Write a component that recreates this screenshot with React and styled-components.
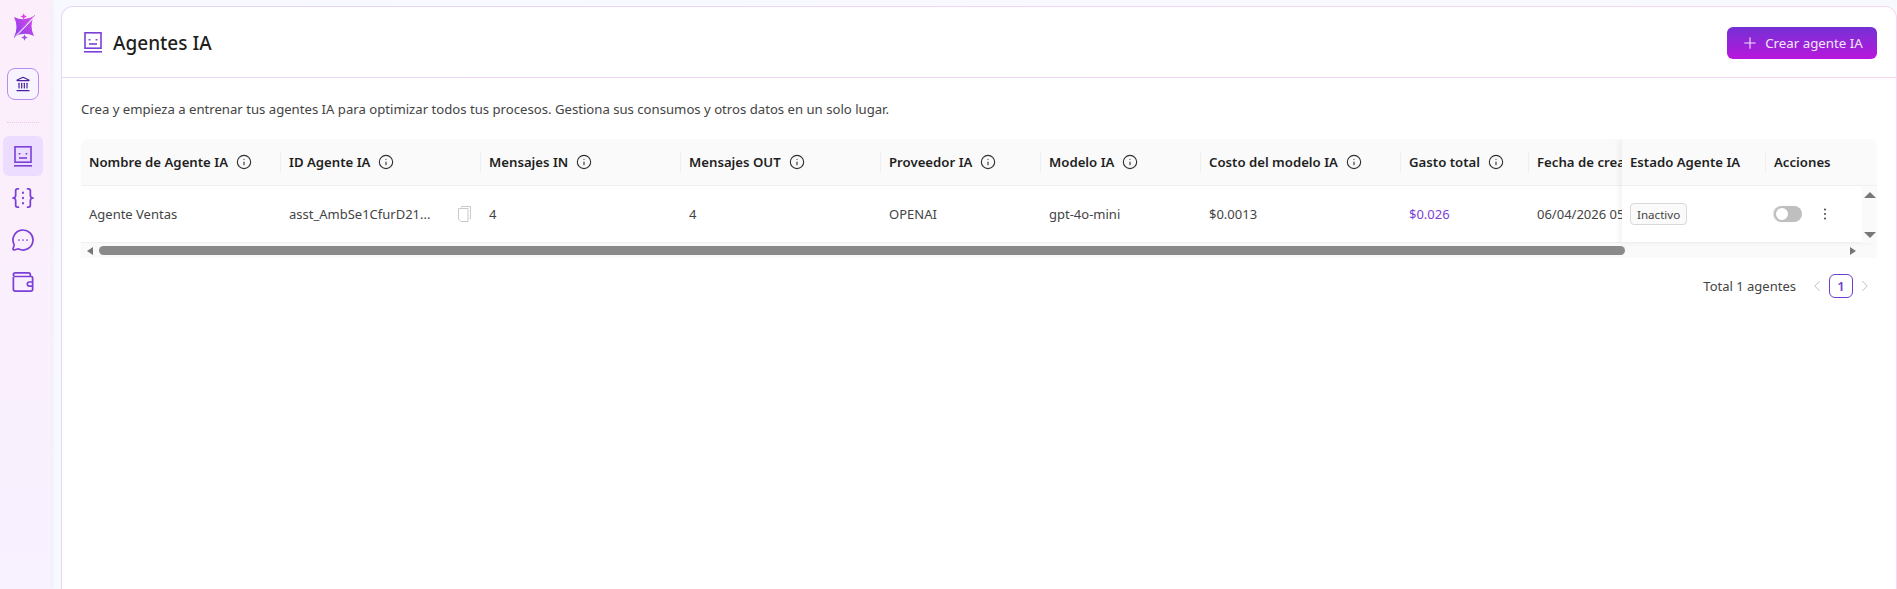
import { ChevronLeft, ChevronRight, Info, Landmark, MessageCircleMore, Plus } from "lucide-react";
import styled, { createGlobalStyle } from "styled-components";

const GlobalStyle = createGlobalStyle`
  html, body {
    margin: 0;
    height: 100%;
    overflow: hidden;
    background: #f8f9fe;
    font-family: "Noto Sans", "Open Sans", sans-serif;
  }
  * { box-sizing: border-box; }
`;

const Page = styled.div`
  display: flex;
  height: 589px;
  overflow: hidden;
`;

const Sidebar = styled.aside`
  width: 51px;
  flex-shrink: 0;
  display: flex;
  flex-direction: column;
  align-items: center;
  padding-top: 13px;
  background: linear-gradient(180deg, #fdeefb 0%, #f8f1ff 100%);
  box-shadow: 1px 0 4px rgba(90, 60, 140, 0.08);
`;

const Logo = styled.svg`
  width: 24px;
  height: 28px;
  margin: 0 0 27px -2px;
`;

const BankButton = styled.div`
  width: 32px;
  height: 32px;
  display: flex;
  align-items: center;
  justify-content: center;
  margin-left: -5px;
  border: 1px solid #b78cf0;
  border-radius: 8px;
  background: #f8f4ff;
  color: #4b1fa3;
`;

const SideDivider = styled.div`
  width: 32px;
  margin: 22px 0 13px -5px;
  border-top: 1px dotted #f3c4e8;
`;

const NavItem = styled.div`
  width: 40px;
  height: 40px;
  margin-left: -5px;
  margin-bottom: 2px;
  display: flex;
  align-items: center;
  justify-content: center;
  border-radius: 6px;
  color: #7c3fd8;
  background: ${({ $active }) => ($active ? "#ecdcff" : "transparent")};
`;

const Main = styled.main`
  flex: 1;
  min-width: 0;
  padding: 6px 0 0 10px;
`;

const Card = styled.section`
  height: 640px;
  border: 1px solid transparent;
  border-radius: 12px 12px 0 0;
  background:
    linear-gradient(#fff, #fff) padding-box,
    linear-gradient(90deg, #e6d6f8, #fbd6f0) border-box;
`;

const Header = styled.header`
  height: 71px;
  display: flex;
  align-items: center;
  justify-content: space-between;
  padding: 1px 19px 0 22px;
  border-bottom: 1px solid transparent;
  border-image: linear-gradient(90deg, #e6d6f8, #fbd6f0) 1;
`;

const TitleGroup = styled.div`
  display: flex;
  align-items: center;
  gap: 11px;
  color: #7c3fd8;
`;

const Title = styled.h1`
  margin: 0;
  font-size: 19px;
  font-weight: 500;
  color: #1f1f1f;
`;

const CreateButton = styled.button`
  width: 150px;
  height: 32px;
  display: flex;
  align-items: center;
  justify-content: center;
  gap: 6px;
  border: none;
  border-radius: 6px;
  font: 13.3px "Noto Sans", sans-serif;
  color: #f3e6fb;
  background: linear-gradient(180deg, #7430d4 0%, #b917dc 100%);
`;

const Content = styled.div`
  padding: 21px 19px 0;
`;

const Intro = styled.p`
  margin: 0 0 20px;
  font-size: 13.15px;
  line-height: 20px;
  color: #444;
`;

const TableBox = styled.div`
  border-radius: 8px 8px 0 0;
  overflow: hidden;
`;

const TableRow = styled.div`
  display: flex;
`;

const ScrollPane = styled.div`
  width: 1541px;
  flex-shrink: 0;
  overflow: hidden;
`;

const FixedPane = styled.div`
  width: 255px;
  flex-shrink: 0;
  background: #fff;
  box-shadow: -3px 0 6px rgba(0, 0, 0, 0.05);
  z-index: 1;
`;

const Grid = styled.div`
  display: grid;
  grid-template-columns: ${({ $columns }) => $columns};
`;

const HeadCell = styled.div`
  position: relative;
  height: 47px;
  display: flex;
  align-items: center;
  gap: 8px;
  padding: 0 8px;
  font-size: 13.2px;
  font-weight: 600;
  white-space: nowrap;
  overflow: hidden;
  color: #1f1f1f;
  background: #fafafa;
  border-bottom: 1px solid #f0f0f0;
  ${({ $separator }) =>
    $separator &&
    `&::after {
      content: "";
      position: absolute;
      right: 0;
      top: 12px;
      height: 22px;
      width: 1px;
      background: #f0f0f0;
    }`}
  svg { flex-shrink: 0; color: #333; }
`;

const BodyCell = styled.div`
  height: 57px;
  display: flex;
  align-items: center;
  justify-content: ${({ $spread }) => ($spread ? "space-between" : "flex-start")};
  padding: ${({ $spread }) => ($spread ? "0 10px 0 8px" : "0 8px")};
  font-size: 13px;
  white-space: nowrap;
  overflow: hidden;
  color: ${({ $accent }) => ($accent ? "#7c3fd8" : "#444")};
  border-bottom: 1px solid #f0f0f0;
`;

const ActionsCell = styled(BodyCell)`
  gap: 21px;
  color: #555;
`;

const Tag = styled.span`
  height: 22px;
  padding: 0 6px;
  display: inline-flex;
  align-items: center;
  font-size: 11.6px;
  color: #444;
  background: #fafafa;
  border: 1px solid #d9d9d9;
  border-radius: 4px;
`;

const Switch = styled.span`
  width: 28px;
  height: 16px;
  padding: 2px;
  border-radius: 8px;
  background: #bfbfbf;
  box-shadow: -1px 0 1px rgba(0, 0, 0, 0.15);
`;

const SwitchHandle = styled.span`
  display: block;
  width: 12px;
  height: 12px;
  border-radius: 50%;
  background: #fff;
`;

const VerticalBar = styled.div`
  width: 15px;
  height: 57px;
  flex-shrink: 0;
  display: flex;
  flex-direction: column;
  align-items: center;
  justify-content: space-between;
  padding: 6px 0 5px;
  background: #fafafa;
`;

const FixedBody = styled.div`
  display: flex;
`;

const HorizontalBar = styled.div`
  height: 15px;
  display: flex;
  align-items: center;
  justify-content: space-between;
  padding: 0 21px 0 6px;
  background: #fafafa;
`;

const BarLeft = styled.div`
  display: flex;
  align-items: center;
  gap: 6px;
`;

const Thumb = styled.div`
  width: 1526px;
  height: 9px;
  border-radius: 5px;
  background: #8a8a8a;
`;

const Arrow = styled.span`
  width: 0;
  height: 0;
  border-style: solid;
  border-color: transparent;
  ${({ $dir }) =>
    ({
      left: "border-width: 4px 6px 4px 0; border-right-color: #777;",
      right: "border-width: 4px 0 4px 6px; border-left-color: #777;",
      up: "border-width: 0 6px 6px; border-bottom-color: #777;",
      down: "border-width: 6px 6px 0; border-top-color: #777;",
    })[$dir]}
`;

const Pagination = styled.div`
  display: flex;
  align-items: center;
  justify-content: flex-end;
  height: 24px;
  margin-top: 16px;
  padding-right: 3px;
  font-size: 13px;
  color: #444;
  svg { color: #bdbdbd; }
`;

const Total = styled.span`
  margin-right: 12px;
`;

const PageNumber = styled.span`
  width: 24px;
  height: 24px;
  margin: 0 3px;
  display: flex;
  align-items: center;
  justify-content: center;
  font-weight: 600;
  color: #6f3fd0;
  border: 1px solid #6f3fd0;
  border-radius: 6px;
`;

const AgentIcon = () => (
  <svg width="18" height="21" viewBox="0 0 18 21" fill="none" stroke="currentColor" strokeWidth="1.6">
    <rect x="1" y="0.8" width="16" height="15.4" />
    <path d="M0 19.8h18" />
    <path d="M5.5 7v1.6M12.5 7v1.6" strokeWidth="1.8" />
    <path d="M5 12h8" />
  </svg>
);

const BracesIcon = () => (
  <svg width="22" height="22" viewBox="0 0 24 24" fill="none" stroke="currentColor" strokeWidth="1.9" strokeLinecap="round" strokeLinejoin="round">
    <path d="M7 2H6a2 2 0 0 0-2 2v5a3 3 0 0 1-3 3 3 3 0 0 1 3 3v5a2 2 0 0 0 2 2h1" />
    <path d="M17 2h1a2 2 0 0 1 2 2v5a3 3 0 0 0 3 3 3 3 0 0 0-3 3v5a2 2 0 0 1-2 2h-1" />
    <path d="M12 6v.5M12 11.7v.5M12 17.5v.5" strokeWidth="2.2" />
  </svg>
);

const WalletIcon = () => (
  <svg width="22" height="22" viewBox="0 0 24 24" fill="none" stroke="currentColor" strokeWidth="1.9" strokeLinejoin="round">
    <path d="M1.5 6.5V20a2 2 0 0 0 2 2h17a2 2 0 0 0 2-2V7.5a1.5 1.5 0 0 0-1.5-1.5H3.5a2 2 0 0 1 0-4H18a2 2 0 0 1 2 2v2" />
    <path d="M23 12h-4a2.2 2.2 0 0 0 0 4.5h4" />
  </svg>
);

const CopyIcon = () => (
  <svg width="13" height="16" viewBox="0 0 13 16" fill="none" stroke="#c9c9c9" strokeWidth="1">
    <path d="M3.5 1.5V0.5h9v12h-1" />
    <path d="M0.5 2.5h9.5v13H3L0.5 13z" fill="#fff" />
  </svg>
);

const DotsIcon = () => (
  <svg width="4" height="12" viewBox="0 0 4 12" fill="#555">
    <circle cx="2" cy="1.5" r="1.1" />
    <circle cx="2" cy="6" r="1.1" />
    <circle cx="2" cy="10.5" r="1.1" />
  </svg>
);

const columns = [
  { title: "Nombre de Agente IA", value: "Agente Ventas" },
  { title: "ID Agente IA", value: "asst_AmbSe1CfurD21...", copy: true },
  { title: "Mensajes IN", value: "4" },
  { title: "Mensajes OUT", value: "4" },
  { title: "Proveedor IA", value: "OPENAI" },
  { title: "Modelo IA", value: "gpt-4o-mini" },
  { title: "Costo del modelo IA", value: "$0.0013" },
  { title: "Gasto total", value: "$0.026", accent: true },
  { title: "Fecha de creación", value: "06/04/2026 05:12", plain: true },
];

const scrollColumns = "200px 200px 200px 200px 160px 160px 200px 128px 200px";
const fixedColumns = "144px 111px";

const App = () => {
  return (
    <>
      <GlobalStyle />
      <Page>
        <Sidebar>
          <Logo viewBox="0 0 24 28">
            <defs>
              <linearGradient id="logoFill" x1="0" y1="1" x2="1" y2="0">
                <stop offset="0" stopColor="#8a3cf0" />
                <stop offset="1" stopColor="#d64be6" />
              </linearGradient>
            </defs>
            <path d="M1 4 Q11 9 21 3 Q16 13 21 23 Q11 18 1 24 Q6 14 1 4Z" fill="url(#logoFill)" />
            <path d="M2 24 L21 4" stroke="#fff" strokeWidth="1.2" />
            <path d="M1 25 L22 2" stroke="#b05ae8" strokeWidth="0.7" />
            <path d="M10.7 0.3 L11.6 2.6 L14 3.5 L11.6 4.4 L10.7 6.7 L9.8 4.4 L7.4 3.5 L9.8 2.6Z" fill="#e03fe0" />
            <path d="M11.5 21.3 L12.4 23.6 L14.8 24.5 L12.4 25.4 L11.5 27.7 L10.6 25.4 L8.2 24.5 L10.6 23.6Z" fill="#a04be8" />
          </Logo>
          <BankButton>
            <Landmark size={16} strokeWidth={1.8} />
          </BankButton>
          <SideDivider />
          <NavItem $active>
            <AgentIcon />
          </NavItem>
          <NavItem>
            <BracesIcon />
          </NavItem>
          <NavItem>
            <MessageCircleMore size={24} strokeWidth={1.7} />
          </NavItem>
          <NavItem>
            <WalletIcon />
          </NavItem>
        </Sidebar>
        <Main>
          <Card>
            <Header>
              <TitleGroup>
                <AgentIcon />
                <Title>Agentes IA</Title>
              </TitleGroup>
              <CreateButton>
                <Plus size={18} strokeWidth={1.5} />
                Crear agente IA
              </CreateButton>
            </Header>
            <Content>
              <Intro>
                Crea y empieza a entrenar tus agentes IA para optimizar todos tus procesos. Gestiona sus consumos y otros datos en un solo lugar.
              </Intro>
              <TableBox>
                <TableRow>
                  <ScrollPane>
                    <Grid $columns={scrollColumns}>
                      {columns.map((col, i) => (
                        <HeadCell key={col.title} $separator={i < columns.length - 1}>
                          {col.title}
                          {!col.plain && <Info size={16} strokeWidth={1.7} />}
                        </HeadCell>
                      ))}
                      {columns.map((col) => (
                        <BodyCell key={col.title} $accent={col.accent} $spread={col.copy}>
                          {col.value}
                          {col.copy && <CopyIcon />}
                        </BodyCell>
                      ))}
                    </Grid>
                  </ScrollPane>
                  <FixedPane>
                    <Grid $columns={fixedColumns}>
                      <HeadCell $separator>Estado Agente IA</HeadCell>
                      <HeadCell>Acciones</HeadCell>
                    </Grid>
                    <FixedBody>
                      <Grid $columns="144px 96px">
                        <BodyCell>
                          <Tag>Inactivo</Tag>
                        </BodyCell>
                        <ActionsCell>
                          <Switch>
                            <SwitchHandle />
                          </Switch>
                          <DotsIcon />
                        </ActionsCell>
                      </Grid>
                      <VerticalBar>
                        <Arrow $dir="up" />
                        <Arrow $dir="down" />
                      </VerticalBar>
                    </FixedBody>
                  </FixedPane>
                </TableRow>
                <HorizontalBar>
                  <BarLeft>
                    <Arrow $dir="left" />
                    <Thumb />
                  </BarLeft>
                  <Arrow $dir="right" />
                </HorizontalBar>
              </TableBox>
              <Pagination>
                <Total>Total 1 agentes</Total>
                <ChevronLeft size={18} strokeWidth={1.3} />
                <PageNumber>1</PageNumber>
                <ChevronRight size={18} strokeWidth={1.3} />
              </Pagination>
            </Content>
          </Card>
        </Main>
      </Page>
    </>
  );
};

export default App;
